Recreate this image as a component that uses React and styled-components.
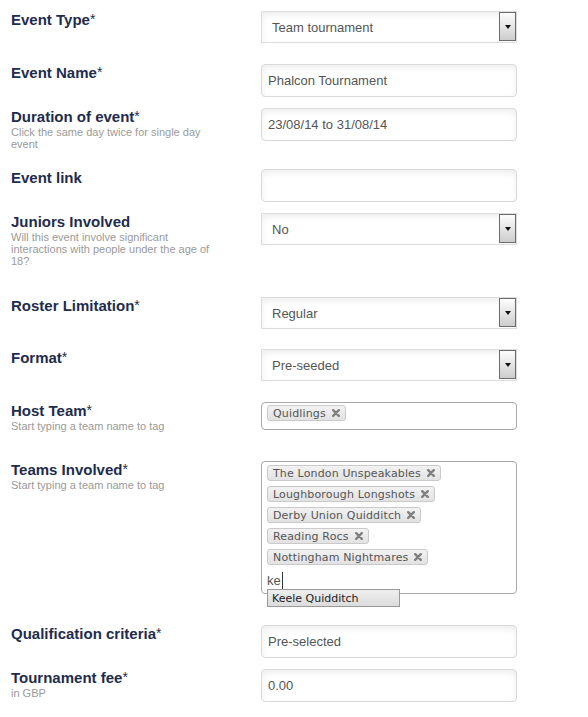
import React from 'react';
import styled, { createGlobalStyle } from 'styled-components';

const GlobalStyle = createGlobalStyle`
  body {
    margin: 0;
    background: #fff;
    font-family: "Liberation Sans", Arial, sans-serif;
  }
`;

const Form = styled.div`
  padding: 10px 0 0 11px;
`;

const Row = styled.div`
  display: grid;
  grid-template-columns: 250px 256px;
  align-items: start;
  height: ${(props) => props.$h}px;
`;

const LabelBlock = styled.div`
  display: flex;
  flex-direction: column;
`;

const Title = styled.span`
  font-size: 15px;
  font-weight: 700;
  line-height: 19px;
  color: #1e2c4d;
`;

const Star = styled.span`
  font-weight: 400;
  font-size: 14px;
  vertical-align: 1px;
`;

const Help = styled.span`
  font-size: 11px;
  line-height: 12px;
  color: #9a9a9a;
  max-width: 215px;
`;

const Field = styled.div`
  margin-top: 1px;
  position: relative;
`;

const TextInput = styled.div`
  box-sizing: border-box;
  height: 33px;
  border: 1px solid #d9d9d9;
  border-radius: 4px;
  background: #fff;
  box-shadow: inset 0 3px 6px rgba(0, 0, 0, 0.07);
  padding: 0 6px;
  display: flex;
  align-items: center;
  font-size: 13px;
  color: #555;
`;

const Select = styled.div`
  box-sizing: border-box;
  height: 32px;
  border: 1px solid #dcdcdc;
  background: #fff;
  box-shadow: inset 0 3px 6px rgba(0, 0, 0, 0.07);
  padding-left: 10px;
  display: flex;
  align-items: center;
  font-size: 13px;
  color: #555;
`;

const ArrowBox = styled.span`
  box-sizing: border-box;
  margin-left: auto;
  align-self: flex-start;
  width: 17px;
  height: 29px;
  border: 1px solid #6b6b6b;
  background: linear-gradient(#fdfdfd, #cdcdcd);
  display: flex;
  align-items: center;
  justify-content: center;

  &::after {
    content: '';
    border-left: 3.5px solid transparent;
    border-right: 3.5px solid transparent;
    border-top: 4px solid #111;
  }
`;

const TagBox = styled.div`
  box-sizing: border-box;
  height: ${(props) => props.$h}px;
  border: 1px solid #a9a9a9;
  border-radius: 4px;
  background: #fff;
  padding: ${(props) => props.$pad};
  display: flex;
  flex-direction: column;
  align-items: flex-start;
  gap: 5px;
`;

const Tag = styled.span`
  box-sizing: border-box;
  height: 16px;
  display: inline-flex;
  align-items: center;
  gap: 6px;
  padding: 0 5px 0 5px;
  border: 1px solid #cacaca;
  border-radius: 3px;
  background: linear-gradient(#f2f2f2, #e2e2e2);
  font-family: "DejaVu Sans", Verdana, sans-serif;
  font-size: 11px;
  letter-spacing: 0.15px;
  color: #555;
`;

const Typed = styled.span`
  display: flex;
  align-items: center;
  height: 20px;
  font-size: 13px;
  color: #555;

  &::after {
    content: '';
    width: 1px;
    height: 17px;
    background: #333;
    margin-left: 1px;
  }
`;

const Suggestion = styled.div`
  position: absolute;
  left: 6px;
  top: 128px;
  box-sizing: border-box;
  width: 133px;
  height: 18px;
  border: 1px solid #9a9a9a;
  background: linear-gradient(#eeeeee, #dcdcdc);
  padding-left: 4px;
  display: flex;
  align-items: center;
  font-family: "DejaVu Sans", Verdana, sans-serif;
  font-size: 11px;
  color: #222;
`;

const Remove = () => (
  <svg width="8" height="8" viewBox="0 0 8 8">
    <path d="M1.2 1.2 L6.8 6.8 M6.8 1.2 L1.2 6.8" stroke="#808080" strokeWidth="2.4" strokeLinecap="round" />
  </svg>
);

const Label = ({ title, help, required }) => (
  <LabelBlock>
    <Title>
      {title}
      {required && <Star>*</Star>}
    </Title>
    {help && <Help>{help}</Help>}
  </LabelBlock>
);

const teams = [
  'The London Unspeakables',
  'Loughborough Longshots',
  'Derby Union Quidditch',
  'Reading Rocs',
  'Nottingham Nightmares',
];

export default function App() {
  return (
    <>
      <GlobalStyle />
      <Form>
        <Row $h={53}>
          <Label title="Event Type" required />
          <Field>
            <Select>Team tournament<ArrowBox /></Select>
          </Field>
        </Row>
        <Row $h={44}>
          <Label title="Event Name" required />
          <Field>
            <TextInput>Phalcon Tournament</TextInput>
          </Field>
        </Row>
        <Row $h={61}>
          <Label title="Duration of event" required help="Click the same day twice for single day event" />
          <Field>
            <TextInput>23/08/14 to 31/08/14</TextInput>
          </Field>
        </Row>
        <Row $h={44}>
          <Label title="Event link" />
          <Field>
            <TextInput />
          </Field>
        </Row>
        <Row $h={84}>
          <Label
            title="Juniors Involved"
            help="Will this event involve significant interactions with people under the age of 18?"
          />
          <Field>
            <Select>No<ArrowBox /></Select>
          </Field>
        </Row>
        <Row $h={52}>
          <Label title="Roster Limitation" required />
          <Field>
            <Select>Regular<ArrowBox /></Select>
          </Field>
        </Row>
        <Row $h={53}>
          <Label title="Format" required />
          <Field>
            <Select>Pre-seeded<ArrowBox /></Select>
          </Field>
        </Row>
        <Row $h={59}>
          <Label title="Host Team" required help="Start typing a team name to tag" />
          <Field>
            <TagBox $h={28} $pad="2px 5px">
              <Tag>Quidlings <Remove /></Tag>
            </TagBox>
          </Field>
        </Row>
        <Row $h={164}>
          <Label title="Teams Involved" required help="Start typing a team name to tag" />
          <Field>
            <TagBox $h={133} $pad="3px 5px">
              {teams.map((t) => (
                <Tag key={t}>{t} <Remove /></Tag>
              ))}
              <Typed>ke</Typed>
            </TagBox>
            <Suggestion>Keele Quidditch</Suggestion>
          </Field>
        </Row>
        <Row $h={44}>
          <Label title="Qualification criteria" required />
          <Field>
            <TextInput>Pre-selected</TextInput>
          </Field>
        </Row>
        <Row $h={44}>
          <Label title="Tournament fee" required help="in GBP" />
          <Field>
            <TextInput>0.00</TextInput>
          </Field>
        </Row>
      </Form>
    </>
  );
}
